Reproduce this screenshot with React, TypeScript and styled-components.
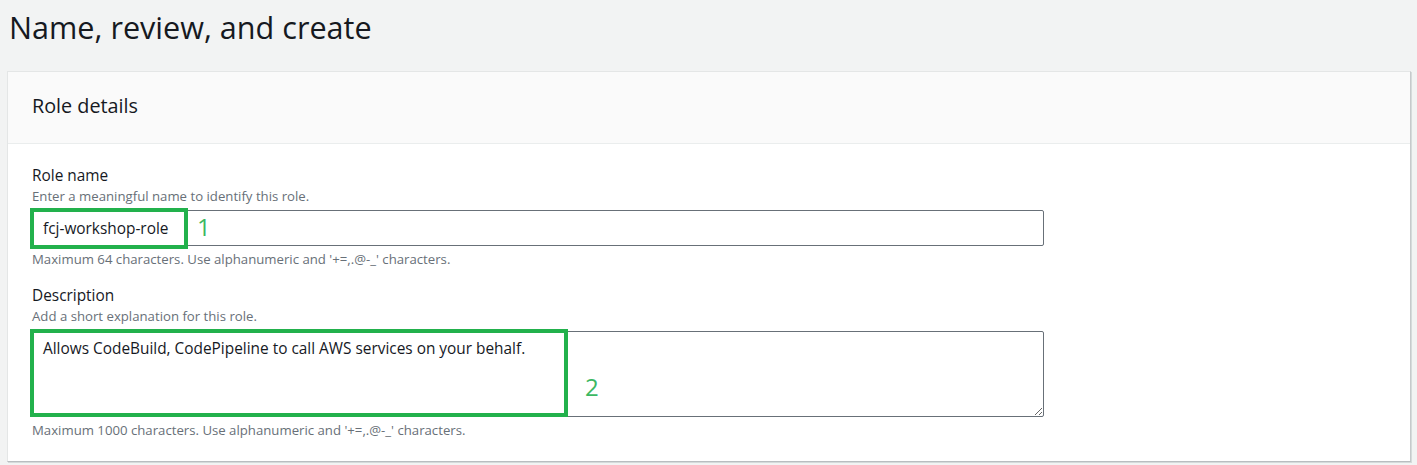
import React from 'react';
import styled, {createGlobalStyle} from 'styled-components';

const GlobalStyle = createGlobalStyle`
  html, body {
    margin: 0;
    padding: 0;
    background: #f2f3f3;
    font-family: "Open Sans", "Noto Sans", Arial, sans-serif;
    color: #16191f;
  }
`;

export default function App() {
  return (
    <>
      <GlobalStyle />
      <Page>
        <Title>Name, review, and create</Title>
        <Card>
          <CardHeader>
            <CardTitle>Role details</CardTitle>
          </CardHeader>
          <CardBody>
            <Field>
              <Label>Role name</Label>
              <Hint>Enter a meaningful name to identify this role.</Hint>
              <Control>
                <Input readOnly value="fcj-workshop-role" />
                <Highlight $width={158} $height={41} $top={-2} />
                <Marker $left={165} $top={3}>1</Marker>
              </Control>
              <Constraint>Maximum 64 characters. Use alphanumeric and '+=,.@-_' characters.</Constraint>
            </Field>
            <Field $gap={17}>
              <Label>Description</Label>
              <Hint>Add a short explanation for this role.</Hint>
              <Control $top={6}>
                <TextArea readOnly value="Allows CodeBuild, CodePipeline to call AWS services on your behalf." />
                <Highlight $width={538} $height={88} $top={-2} />
                <Marker $left={553} $top={42}>2</Marker>
              </Control>
              <Constraint>Maximum 1000 characters. Use alphanumeric and '+=,.@-_' characters.</Constraint>
            </Field>
          </CardBody>
        </Card>
      </Page>
    </>
  );
}

const Page = styled.div`
  padding: 0 6px 2px 7px;
`;

const Title = styled.h1`
  margin: 0;
  padding: 8px 0 0 2px;
  height: 71px;
  box-sizing: border-box;
  font-size: 30.6px;
  font-weight: 400;
  line-height: 38px;
  color: #16191f;
`;

const Card = styled.section`
  background: #ffffff;
  border: 1px solid #e4e6e6;
  border-right-color: #c6c9cb;
  border-bottom-color: #b9bdc0;
  box-shadow: 1px 1px 0 #d5dbdb;
  width: 1402px;
`;

const CardHeader = styled.header`
  background: #fafafa;
  border-bottom: 1px solid #eaeded;
  height: 71px;
  display: flex;
  align-items: center;
  padding: 0 24px;
`;

const CardTitle = styled.h2`
  margin: 0 0 4px;
  font-size: 19.8px;
  font-weight: 400;
  line-height: 26px;
`;

const CardBody = styled.div`
  padding: 21px 24px 22px;
  display: flex;
  flex-direction: column;
`;

const Field = styled.div<{$gap?: number}>`
  display: flex;
  flex-direction: column;
  margin-top: ${p => p.$gap ?? 0}px;
`;

const Label = styled.div`
  font-size: 15.4px;
  line-height: 22px;
  color: #16191f;
`;

const Hint = styled.div`
  font-size: 13.2px;
  line-height: 18px;
  color: #687078;
`;

const Constraint = styled(Hint)`
  margin-top: 4px;
`;

const Control = styled.div<{$top?: number}>`
  position: relative;
  width: 1012px;
  margin-top: ${p => p.$top ?? 5}px;
`;

const Input = styled.input`
  display: block;
  width: 100%;
  height: 36px;
  box-sizing: border-box;
  border: 1px solid #687078;
  border-radius: 2px;
  padding: 0 10px;
  font-family: inherit;
  font-size: 15.4px;
  color: #16191f;
  background: #fff;
  outline: none;
`;

const TextArea = styled.textarea`
  display: block;
  width: 100%;
  height: 86px;
  box-sizing: border-box;
  border: 1px solid #687078;
  border-radius: 2px;
  padding: 5px 10px;
  font-family: inherit;
  font-size: 15.4px;
  line-height: 24px;
  color: #16191f;
  background: #fff;
  outline: none;
  resize: vertical;
`;

const Highlight = styled.div<{$width: number; $height: number; $top: number}>`
  position: absolute;
  left: -2px;
  top: ${p => p.$top}px;
  width: ${p => p.$width}px;
  height: ${p => p.$height}px;
  box-sizing: border-box;
  border: 4px solid #22b14c;
  pointer-events: none;
`;

const Marker = styled.span<{$left: number; $top: number}>`
  position: absolute;
  left: ${p => p.$left}px;
  top: ${p => p.$top}px;
  font-size: 24px;
  line-height: 28px;
  color: #3cb863;
`;
